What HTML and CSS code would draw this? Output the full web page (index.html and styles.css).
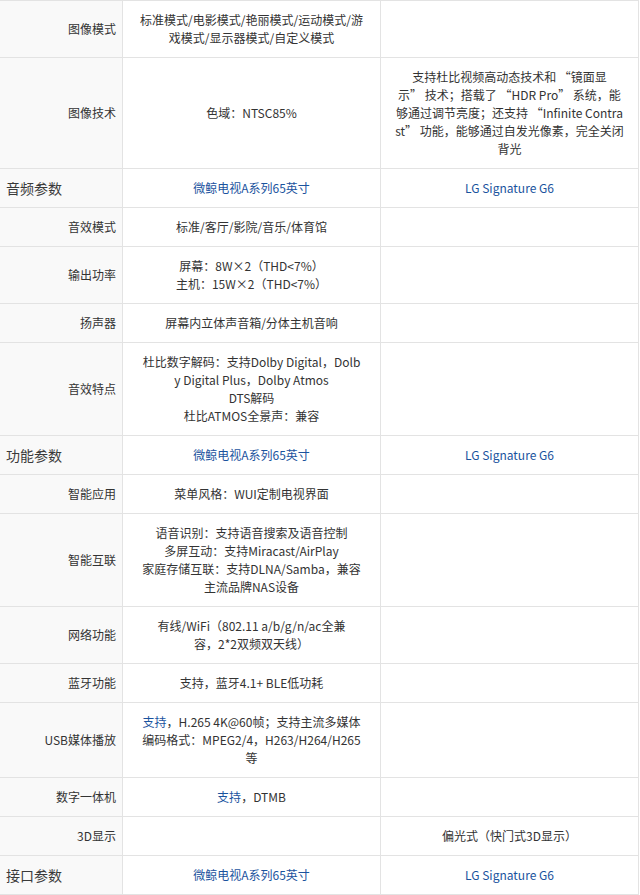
FILE: index.html
```html
<!DOCTYPE html>
<html lang="zh-CN">
<head>
<meta charset="utf-8">
<title>参数对比</title>
<link rel="stylesheet" href="styles.css">
</head>
<body>
<table class="spec">
  <colgroup>
    <col class="c-label">
    <col class="c-val">
    <col class="c-val">
  </colgroup>
  <tbody>
    <tr class="r2">
      <th class="label">图像模式</th>
      <td>标准模式/电影模式/艳丽模式/运动模式/游<br>戏模式/显示器模式/自定义模式</td>
      <td></td>
    </tr>
    <tr>
      <th class="label">图像技术</th>
      <td>色域：NTSC85%</td>
      <td>支持杜比视频高动态技术和 “镜面显<br>示” 技术；搭载了 “HDR Pro” 系统，能<br>够通过调节亮度；还支持 “Infinite Contra<br>st” 功能，能够通过自发光像素，完全关闭<br>背光</td>
    </tr>
    <tr class="group">
      <th class="group-title">音频参数</th>
      <td class="link">微鲸电视A系列65英寸</td>
      <td class="link">LG Signature G6</td>
    </tr>
    <tr>
      <th class="label">音效模式</th>
      <td>标准/客厅/影院/音乐/体育馆</td>
      <td></td>
    </tr>
    <tr>
      <th class="label">输出功率</th>
      <td>屏幕：8W×2（THD&lt;7%）<br>主机：15W×2（THD&lt;7%）</td>
      <td></td>
    </tr>
    <tr>
      <th class="label">扬声器</th>
      <td>屏幕内立体声音箱/分体主机音响</td>
      <td></td>
    </tr>
    <tr>
      <th class="label">音效特点</th>
      <td>杜比数字解码：支持Dolby Digital，Dolb<br>y Digital Plus，Dolby Atmos<br>DTS解码<br>杜比ATMOS全景声：兼容</td>
      <td></td>
    </tr>
    <tr class="group">
      <th class="group-title">功能参数</th>
      <td class="link">微鲸电视A系列65英寸</td>
      <td class="link">LG Signature G6</td>
    </tr>
    <tr>
      <th class="label">智能应用</th>
      <td>菜单风格：WUI定制电视界面</td>
      <td></td>
    </tr>
    <tr>
      <th class="label">智能互联</th>
      <td>语音识别：支持语音搜索及语音控制<br>多屏互动：支持Miracast/AirPlay<br>家庭存储互联：支持DLNA/Samba，兼容<br>主流品牌NAS设备</td>
      <td></td>
    </tr>
    <tr>
      <th class="label">网络功能</th>
      <td>有线/WiFi（802.11 a/b/g/n/ac全兼<br>容，2*2双频双天线）</td>
      <td></td>
    </tr>
    <tr>
      <th class="label">蓝牙功能</th>
      <td>支持，蓝牙4.1+ BLE低功耗</td>
      <td></td>
    </tr>
    <tr>
      <th class="label">USB媒体播放</th>
      <td><a class="inline-link" href="#">支持</a>，H.265 4K@60帧；支持主流多媒体<br>编码格式：MPEG2/4，H263/H264/H265<br>等</td>
      <td></td>
    </tr>
    <tr>
      <th class="label">数字一体机</th>
      <td><a class="inline-link" href="#">支持</a>，DTMB</td>
      <td></td>
    </tr>
    <tr>
      <th class="label">3D显示</th>
      <td></td>
      <td>偏光式（快门式3D显示）</td>
    </tr>
    <tr class="group">
      <th class="group-title">接口参数</th>
      <td class="link">微鲸电视A系列65英寸</td>
      <td class="link">LG Signature G6</td>
    </tr>
  </tbody>
</table>
</body>
</html>
```

FILE: styles.css
```css
html, body {
  margin: 0;
  padding: 0;
  background: #ffffff;
}

body {
  font-family: "Noto Sans CJK SC", "Microsoft YaHei", sans-serif;
  font-size: 12px;
  line-height: 18px;
  color: #333333;
  overflow: hidden;
}

.spec {
  width: 640px;
  margin-left: -1px;
  margin-top: 0;
  border-collapse: collapse;
  table-layout: fixed;
}

.c-label { width: 123px; }
.c-val { width: 258px; }

.spec th,
.spec td {
  border: 1px solid #e3e3e3;
  padding: 10px 6px;
  vertical-align: middle;
  font-weight: normal;
}

.spec td {
  text-align: center;
  white-space: nowrap;
}

.spec th {
  background: #f9f9f9;
}

.label {
  text-align: right;
  padding-right: 10px;
}

.group-title {
  text-align: left;
  padding-left: 11px;
  font-size: 14px;
  color: #3a3a3a;
}

.link {
  color: #1a539e;
}

.inline-link {
  color: #1a539e;
  text-decoration: none;
}
```
